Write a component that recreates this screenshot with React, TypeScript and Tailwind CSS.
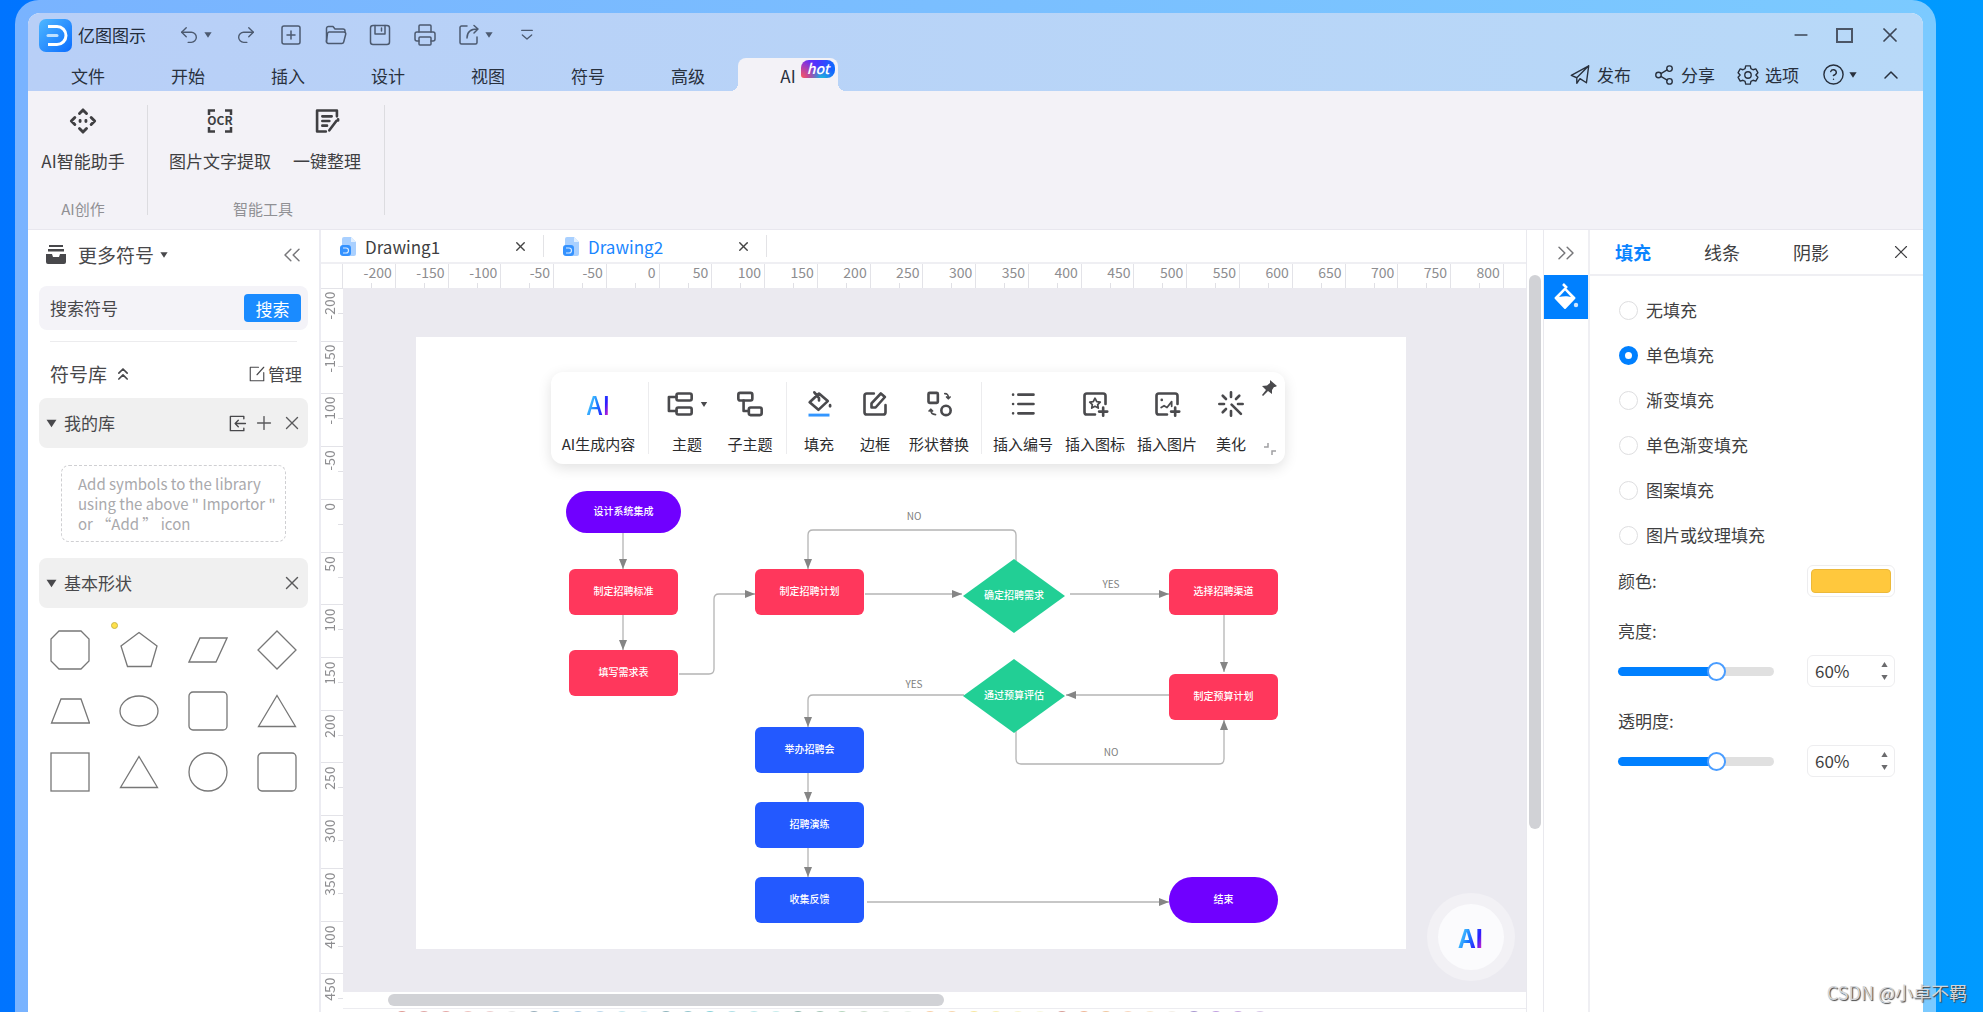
import { useState } from "react";
import type { ReactNode } from "react";
import {
  ChevronUp,
  ChevronsLeft,
  ChevronsRight,
  ChevronsUp,
  CircleQuestionMark,
  Minus,
  Plus,
  Printer,
  Redo2,
  Share2,
  SquarePlus,
  Undo2,
  X
} from "lucide-react";

interface IconProps {
  children: ReactNode;
  className?: string;
  strokeWidth?: number;
}

// 24x24 line icon wrapper, same defaults as lucide
const Icon = ({ children, className = "size-6", strokeWidth = 2 }: IconProps) => (
  <svg
    viewBox="0 0 24 24"
    className={className}
    fill="none"
    stroke="currentColor"
    strokeWidth={strokeWidth}
    strokeLinecap="round"
    strokeLinejoin="round"
    aria-hidden="true"
  >
    {children}
  </svg>
);

const Caret = ({ className = "w-2 h-1.5" }: { className?: string }) => (
  <svg viewBox="0 0 10 7" className={className} fill="currentColor" aria-hidden="true">
    <path d="M.5 0h9L5 7z" />
  </svg>
);

const Logo = () => (
  <svg viewBox="0 0 33 33" className="size-[33px]" aria-hidden="true">
    <defs>
      <linearGradient id="logo" x1="0" y1="0" x2="1" y2="1">
        <stop offset="0" stopColor="#4fb8ff" />
        <stop offset="1" stopColor="#0a6cff" />
      </linearGradient>
    </defs>
    <rect width="33" height="33" rx="7" fill="url(#logo)" />
    <path d="M9 7.500h9a9 9 0 0 1 0 18h-9" fill="none" stroke="#fff" strokeWidth="3" />
    <path d="M9 16.500h9" stroke="#bfe0ff" strokeWidth="3" strokeLinecap="round" />
  </svg>
);

const FolderIcon = () => (
  <Icon className="size-6" strokeWidth={1.5}>
    <path d="M2.500 19V5.500a2 2 0 0 1 2-2h4.500l2 2.500h8a2 2 0 0 1 2 2v1" />
    <path d="M5 9h15a1.800 1.800 0 0 1 1.700 2.300l-2 7.700a2 2 0 0 1-2 1.500H4.500a2 2 0 0 1-2-2.500l1-7.500A1.800 1.800 0 0 1 5 9z" />
  </Icon>
);

const SaveIcon = () => (
  <Icon className="size-6" strokeWidth={1.5}>
    <rect x="2.500" y="2.500" width="19" height="19" rx="2.500" />
    <path d="M7 2.500v8.500h10V2.500M13.500 5v3" />
  </Icon>
);

const ExportIcon = () => (
  <Icon className="size-6" strokeWidth={1.5}>
    <path d="M10 3H4.500a1.500 1.500 0 0 0-1.500 1.500v15A1.500 1.500 0 0 0 4.500 21h14a1.500 1.500 0 0 0 1.500-1.500V14" />
    <path d="M10 15c0-6 3-9 10.500-9M17 2.500 21 6l-4 4" />
  </Icon>
);

const SendIcon = () => (
  <Icon className="size-[22px]" strokeWidth={1.5}>
    <path d="M21.500 2 2.500 12.500l6 2.500L21.500 2 19 20.500l-7-4.500M8.500 15v6l3.500-5" />
  </Icon>
);

const GearIcon = () => (
  <Icon className="size-[22px]" strokeWidth={1.5}>
    <path d="M9.500 2h5l.7 3 2.300 1.300 3-.9 2.300 4.100-2.200 2.500 2.200 2.500-2.300 4.100-3-.9-2.300 1.300-.7 3h-5l-.7-3-2.300-1.300-3 .9-2.300-4.100L3.400 12 1.200 9.500l2.300-4.100 3 .9L8.800 5z" />
    <circle cx="12" cy="12" r="3.500" />
  </Icon>
);

const AssistantIcon = () => (
  <Icon className="size-7" strokeWidth={2.5}>
    <path d="M9 5.500 12 2.500l3 3M9 18.500l3 3 3-3M5 9l-3 3 3 3M19 9l3 3-3 3" />
    <path d="M9.500 11.500v1M14.500 11.500v1" />
  </Icon>
);

const OcrIcon = () => (
  <svg viewBox="0 0 28 28" className="size-7" aria-hidden="true">
    <path
      d="M3 8V3.500h6M19 3.500h6V8M25 20v4.500h-6M9 24.500H3V20"
      fill="none"
      stroke="currentColor"
      strokeWidth="2.500"
    />
    <text x="14" y="18" fontSize="12" fontWeight="700" textAnchor="middle" fill="currentColor">
      OCR
    </text>
  </svg>
);

const TidyIcon = () => (
  <Icon className="size-7" strokeWidth={2.25}>
    <path d="M11 21H3.500V3h17v5" />
    <path d="M8 8h8M8 12h6M8 16h4M14 20l6-8M21.500 10.500v1" />
  </Icon>
);

const DrawerIcon = () => (
  <svg viewBox="0 0 22 22" className="size-[22px]" fill="currentColor" aria-hidden="true">
    <path d="M4 1h14v2H4zM3 5h16v2.500H3zM1 10h6l1 3h6l1-3h6v8a2 2 0 0 1-2 2H3a2 2 0 0 1-2-2z" />
  </svg>
);

const DocIcon = () => (
  <svg viewBox="0 0 18 21" className="w-[18px] h-[21px]" aria-hidden="true">
    <path d="M5 1h7l5 5v12a2 2 0 0 1-2 2H5a2 2 0 0 1-2-2V3a2 2 0 0 1 2-2z" fill="#a9d0ff" />
    <path d="M12 1l5 5h-5z" fill="#e2f0ff" />
    <rect x="1" y="9" width="11" height="11" rx="3" fill="#3492ff" />
    <path d="M4 12h3a2.500 2.500 0 0 1 0 5H4" fill="none" stroke="#d7eaff" strokeWidth="1.200" />
  </svg>
);

const BucketSolidIcon = () => (
  <svg viewBox="0 0 26 28" className="w-[26px] h-7" aria-hidden="true">
    <path d="M10 1l4 4" stroke="#fff" strokeWidth="2.500" />
    <path d="M12 5.500 21.500 15 12 25 2.500 15z" fill="#fff" stroke="#fff" strokeWidth="2" strokeLinejoin="round" />
    <path d="M12 7.500l6 6.500c-3-1-8-1-12 0z" fill="#0080ff" />
    <circle cx="23" cy="22" r="2.200" fill="#cfe6ff" />
  </svg>
);

const TopicIcon = () => (
  <Icon className="size-7" strokeWidth={2.25}>
    <rect x="9" y="3" width="13" height="6" rx="1.500" />
    <rect x="9" y="15" width="13" height="6" rx="1.500" />
    <path d="M9 6H2.500v12H9" />
  </Icon>
);

const SubTopicIcon = () => (
  <Icon className="size-7" strokeWidth={2.25}>
    <rect x="2" y="2.500" width="12" height="6.500" rx="1.500" />
    <rect x="11" y="15" width="11" height="6.500" rx="1.500" />
    <path d="M6.500 9v9H11" />
  </Icon>
);

const FillIcon = () => (
  <Icon className="size-7" strokeWidth={2.25}>
    <path d="M12 3 19.500 9.500 11.500 17 4 10.500zM8 2l4 5v2" />
    <path d="M21.500 13v1" />
    <path d="M3 21.500h18" stroke="#3396ff" strokeWidth="2.500" strokeLinecap="butt" />
  </Icon>
);

const BorderIcon = () => (
  <Icon className="size-7" strokeWidth={2.25}>
    <path d="M11 3H5a2 2 0 0 0-2 2v14a2 2 0 0 0 2 2h14a2 2 0 0 0 2-2v-6" />
    <path d="M9 15v-3.500l8-8.500 3.500 3-8 9z" />
  </Icon>
);

const ReplaceIcon = () => (
  <Icon className="size-7" strokeWidth={2.25}>
    <rect x="3" y="2.500" width="8" height="8.500" rx="1" />
    <circle cx="18" cy="17.500" r="4" />
    <path d="M17 3c2.500 0 3 1 3 4M18.500 6l1.500 1.500L21.500 6M9 21c-3 0-4-1-4-4M3.500 18 5 16.500 6.500 18" strokeWidth="1.500" />
  </Icon>
);

const NumberingIcon = () => (
  <Icon className="size-7" strokeWidth={2.25}>
    <path d="M8 4h13M8 12h13M8 20h13M3.500 4v.010M3.500 12v.010M3.500 20v.010" />
  </Icon>
);

const InsertIconIcon = () => (
  <Icon className="size-7" strokeWidth={2.25}>
    <path d="M12 21H5a2 2 0 0 1-2-2V5a2 2 0 0 1 2-2h14a2 2 0 0 1 2 2v7M19 15v7M15.500 18.500h7" />
    <path d="M12 7l1.500 3 3 .4-2.200 2.100.5 3-2.800-1.500-2.800 1.500.5-3-2.200-2.100 3-.4z" strokeWidth="1.500" />
  </Icon>
);

const InsertImageIcon = () => (
  <Icon className="size-7" strokeWidth={2.25}>
    <path d="M12 21H5a2 2 0 0 1-2-2V5a2 2 0 0 1 2-2h14a2 2 0 0 1 2 2v7M19 15v7M15.500 18.500h7" />
    <path d="M7.500 8.500v.010" />
    <path d="M7 15l2.500-1.500 2.500 1.500 4-5v4" strokeWidth="1.500" />
  </Icon>
);

const BeautifyIcon = () => (
  <Icon className="size-7" strokeWidth={2.25}>
    <path d="M12 2v4M12 18v4M2 12h4M18 12h4M4.900 4.900l2.800 2.800M19.100 4.900l-2.800 2.800M4.900 19.100l2.800-2.800M12.500 12.500l8 8" />
  </Icon>
);

const PinIcon = () => (
  <svg viewBox="0 0 16 16" className="size-4" fill="currentColor" aria-hidden="true">
    <path d="M9 0l7 6-2 1-1 0-2 3 0 4-4-3-5 5-1-1 4-5-4-4 5-.5L9 3z" />
  </svg>
);

const MENU = ["文件", "开始", "插入", "设计", "视图", "符号", "高级"];

const Header = () => (
  <header className="h-[78px] shrink-0 flex flex-col bg-linear-to-r from-[#b8cff7] to-[#b8d9f8]">
    <div className="h-11 flex items-center justify-between pl-[11px] pr-[21px]">
      <div className="flex items-center text-[#4c5a70]">
        <Logo />
        <span className="ml-1.5 text-[17px] text-[#222b3a]">亿图图示</span>
        <div className="flex items-center ml-8">
          <button className="flex items-center gap-1 w-[46px]" aria-label="撤销">
            <Undo2 className="size-[22px]" strokeWidth={1.5} />
            <Caret />
          </button>
          <button className="w-11 flex justify-center" aria-label="重做">
            <Redo2 className="size-[22px]" strokeWidth={1.5} />
          </button>
          <button className="w-[45px] flex justify-center" aria-label="新建">
            <SquarePlus className="size-6" strokeWidth={1.5} />
          </button>
          <button className="w-[45px] flex justify-center" aria-label="打开">
            <FolderIcon />
          </button>
          <button className="w-11 flex justify-center" aria-label="保存">
            <SaveIcon />
          </button>
          <button className="w-[45px] flex justify-center" aria-label="打印">
            <Printer className="size-6" strokeWidth={1.5} />
          </button>
          <button className="ml-2.5 flex items-center gap-1" aria-label="导出">
            <ExportIcon />
            <Caret />
          </button>
          <button className="ml-[26px]" aria-label="更多">
            <Icon className="size-4" strokeWidth={2}>
              <path d="M4 5h16M5 12l7 6 7-6" />
            </Icon>
          </button>
        </div>
      </div>
      <div className="flex items-center gap-[25px] text-[#3d4656]">
        <button aria-label="最小化">
          <Minus className="size-5" strokeWidth={2} />
        </button>
        <button aria-label="最大化">
          <span className="block w-[17px] h-[15px] border-2 border-[#4c5666]" />
        </button>
        <button aria-label="关闭">
          <X className="size-6" strokeWidth={1.75} />
        </button>
      </div>
    </div>

    <div className="flex-1 flex items-end justify-between pl-2.5">
      <nav className="flex text-[17px] text-[#28303d]">
        {MENU.map((item) => (
          <button key={item} className="w-[100px] h-[33px] pt-0.5">
            {item}
          </button>
        ))}
        <button className="relative w-[100px] h-[33px] pt-0.5 rounded-t-lg bg-[#f3f2f7] before:absolute before:-left-2 before:bottom-0 before:size-2 before:bg-[radial-gradient(circle_at_0_0,transparent_8px,#f3f2f7_8px)] after:absolute after:-right-2 after:bottom-0 after:size-2 after:bg-[radial-gradient(circle_at_100%_0,transparent_8px,#f3f2f7_8px)]">
          AI
          <span className="absolute right-[3px] top-[2px] w-[34px] h-[18px] rounded-lg rounded-bl-[3px] bg-[radial-gradient(circle_at_0_100%,#ff5a5a_0,transparent_50%),radial-gradient(circle_at_60%_110%,#18c8d8_0,transparent_50%),linear-gradient(to_right,#7a2bf0,#4a35ff_50%,#0a6cff)] text-white text-[14px] leading-[17px] font-medium italic">
            hot
          </span>
        </button>
      </nav>
      <div className="flex items-center h-[33px] pr-5 text-[17px] text-[#28303d]">
        <button className="flex items-center gap-1.5">
          <SendIcon />
          发布
        </button>
        <button className="flex items-center gap-1.5 ml-[22px]">
          <Share2 className="size-[22px]" strokeWidth={1.5} />
          分享
        </button>
        <button className="flex items-center gap-1.5 ml-[22px]">
          <GearIcon />
          选项
        </button>
        <button className="flex items-center gap-1 ml-[23px]" aria-label="帮助">
          <CircleQuestionMark className="size-[23px]" strokeWidth={1.5} />
          <Caret />
        </button>
        <button className="ml-[22px]" aria-label="收起功能区">
          <ChevronUp className="size-6" strokeWidth={1.5} />
        </button>
      </div>
    </div>
  </header>
);

const RibbonButton = ({ icon, label, className }: { icon: ReactNode; label: string; className: string }) => (
  <button className={`flex flex-col items-center gap-3.5 ${className}`}>
    {icon}
    <span className="text-[17px] leading-6 whitespace-nowrap">{label}</span>
  </button>
);

const Ribbon = () => (
  <div className="h-[139px] shrink-0 flex bg-[#f3f2f7] border-b border-[#e8e7ee] text-[#3f3f42]">
    <section className="pt-4 pb-2.5 pl-2.5 pr-[19px] flex flex-col justify-between">
      <RibbonButton icon={<AssistantIcon />} label="AI智能助手" className="w-[90px]" />
      <p className="text-[15px] leading-5 text-center text-[#909094]">AI创作</p>
    </section>
    <div className="w-px my-3.5 bg-[#dcdce0]" />
    <section className="pt-4 pb-2.5 pl-4 pr-1.5 flex flex-col justify-between">
      <div className="flex">
        <RibbonButton icon={<OcrIcon />} label="图片文字提取" className="w-28" />
        <RibbonButton icon={<TidyIcon />} label="一键整理" className="w-[102px]" />
      </div>
      <p className="pr-4 text-[15px] leading-5 text-center text-[#909094]">智能工具</p>
    </section>
    <div className="w-px my-3.5 bg-[#dcdce0]" />
  </div>
);

// Library shapes, each drawn in a 40x40 box
const SHAPES: ReactNode[] = [
  <path d="M9 1h22l8 8v22l-8 8H9l-8-8V9z" />,
  <path d="M20 2.500 38 16l-6 20.500H8.500L2 16z" />,
  <path d="M12 8h27L28 32H1z" />,
  <path d="M20 1l19 19-19 19L1 20z" />,
  <path d="M11 8h20l8.500 24H1.500z" />,
  <ellipse cx="20" cy="20" rx="19" ry="15" />,
  <rect x="1" y="1" width="38" height="38" rx="4" />,
  <path d="M20 4.500 38.500 35.500h-37z" />,
  <rect x="1" y="1" width="38" height="38" />,
  <path d="M20 4.500 38.500 35.500h-37z" />,
  <circle cx="20" cy="20" r="19" />,
  <rect x="1" y="1" width="38" height="38" rx="4" />
];

const Sidebar = () => (
  <aside className="w-[293px] shrink-0 bg-white border-r-2 border-[#ececf2] px-[11px] text-[#48484b]">
    <div className="h-[50px] flex items-center pl-1.5 pr-0.5">
      <DrawerIcon />
      <button className="ml-[11px] flex items-center gap-1.5 text-[19px]">
        更多符号
        <Caret />
      </button>
      <button className="ml-auto" aria-label="折叠面板">
        <ChevronsLeft className="size-7 text-[#77777a]" strokeWidth={1.25} />
      </button>
    </div>

    <form className="mt-1.5 h-11 flex items-center rounded-lg bg-[#f4f3f8] pl-[11px] pr-[7px]">
      <input
        type="search"
        aria-label="搜索符号"
        placeholder="搜索符号"
        className="flex-1 min-w-0 bg-transparent text-[17px] outline-none placeholder:text-[#48484b]"
      />
      <button type="button" className="w-[57px] h-7 rounded bg-[#1a8bff] text-[17px] leading-none text-white">
        搜索
      </button>
    </form>

    <div className="mt-[11px] mx-[11px] h-px bg-[#ececee]" />

    <div className="h-14 mt-1 flex items-center pl-[11px] pr-1.5">
      <h2 className="text-[19px]">符号库</h2>
      <ChevronsUp className="ml-1.5 size-5" strokeWidth={2} />
      <button className="ml-auto flex items-center gap-0.5 text-[17px]">
        <Icon className="size-[18px]" strokeWidth={1.5}>
          <path d="M14 3H3v18h18V10M12 13l9-10" />
        </Icon>
        管理
      </button>
    </div>

    <div className="h-[50px] -mt-1 flex items-center rounded-lg bg-[#f0f0f0] pl-[7px] pr-[5px]">
      <Caret className="w-[11px] h-[9px]" />
      <h3 className="ml-[7px] text-[17px]">我的库</h3>
      <div className="ml-auto flex items-center gap-1.5">
        <button aria-label="导入">
          <Icon className="size-[19px]" strokeWidth={1.75}>
            <path d="M20 6V3H3v18h17v-3M22 12H9M13 8l-4 4 4 4" />
          </Icon>
        </button>
        <button aria-label="添加">
          <Plus className="size-[22px] text-[#5a5a5c]" strokeWidth={1.5} />
        </button>
        <button aria-label="移除我的库">
          <X className="size-[22px] text-[#5a5a5c]" strokeWidth={1.5} />
        </button>
      </div>
    </div>

    <p className="mx-[22px] mt-[17px] h-[77px] border border-dashed border-[#cfcfd2] rounded-lg pt-2 pl-4 text-[15px] leading-5 text-[#a9a9ac] whitespace-nowrap">
      Add symbols to the library
      <br />
      using the above &quot; Importor &quot;
      <br />
      or “Add ” icon
    </p>

    <div className="mt-4 h-[50px] flex items-center rounded-lg bg-[#f0f0f0] pl-[7px] pr-[5px]">
      <Caret className="w-[11px] h-[9px]" />
      <h3 className="ml-[7px] text-[17px]">基本形状</h3>
      <button className="ml-auto" aria-label="移除基本形状">
        <X className="size-[22px] text-[#5a5a5c]" strokeWidth={1.5} />
      </button>
    </div>

    <div className="relative mt-[22px] mx-[11px] grid grid-cols-[repeat(4,auto)] justify-between gap-y-[21px]">
      {SHAPES.map((shape, index) => (
        <button key={index} aria-label={`形状 ${index + 1}`}>
          <svg viewBox="0 0 40 40" className="size-10" fill="none" stroke="#777" strokeWidth="1.300">
            {shape}
          </svg>
        </button>
      ))}
      <span className="absolute left-[61px] -top-2 size-[7px] rounded-full border border-[#c9b64a] bg-[#ffe14a]" />
    </div>
  </aside>
);

const TABS = ["Drawing1", "Drawing2"];

const DocumentTabs = () => {
  const [active, setActive] = useState("Drawing2");

  return (
    <div className="h-[34px] shrink-0 flex items-center border-b-2 border-[#efeff3]">
      {TABS.map((tab) => (
        <div key={tab} className="w-[223px] h-[22px] flex items-center border-r border-[#e3e3e6] pl-[18px] pr-[15px]">
          <DocIcon />
          <button
            onClick={() => setActive(tab)}
            className={`ml-2 text-[17px] leading-none ${active === tab ? "text-[#1a86ff]" : "text-[#3f3f42]"}`}
          >
            {tab}
          </button>
          <button className="ml-auto" aria-label={`关闭 ${tab}`}>
            <X className="size-[15px] text-[#444]" strokeWidth={2.25} />
          </button>
        </div>
      ))}
    </div>
  );
};

const RULER_X = [-200, -150, -100, -50, -50, 0, 50, 100, 150, 200, 250, 300, 350, 400, 450, 500, 550, 600, 650, 700, 750, 800];
const RULER_Y = [-200, -150, -100, -50, 0, 50, 100, 150, 200, 250, 300, 350, 400, 450];

const HorizontalRuler = () => (
  <div className="h-6 shrink-0 flex bg-white">
    <div className="w-[22px] shrink-0 border-r border-[#e3e3e8]" />
    <div className="flex-1 flex pr-[22px]">
      {RULER_X.map((value, index) => (
        <div key={index} className="flex-1 flex flex-col justify-between border-r border-[#e3e3e8]">
          <span className="pr-[3px] text-right text-[14px] leading-4 text-[#8d8d90]">{value}</span>
          <span className="ml-7 h-[5px] w-px bg-[#e0e0e5]" />
        </div>
      ))}
    </div>
  </div>
);

const VerticalRuler = () => (
  <div className="w-[22px] shrink-0 bg-white">
    <div className="h-[738px] flex flex-col">
      {RULER_Y.map((value) => (
        <div key={value} className="flex-1 flex justify-between border-t border-[#e3e3e8]">
          <span className="pb-[3px] text-right rotate-180 [writing-mode:vertical-rl] text-[14px] leading-4 text-[#8d8d90]">
            {value}
          </span>
          <span className="mt-6 w-[5px] h-px bg-[#e0e0e5]" />
        </div>
      ))}
    </div>
  </div>
);

const ToolButton = ({ icon, label, className }: { icon: ReactNode; label: string; className: string }) => (
  <button className={`flex flex-col items-center gap-4 ${className}`}>
    <span className="h-7 flex items-center gap-1.5">{icon}</span>
    <span className="text-[15px] leading-5 text-[#2b2b2d] whitespace-nowrap">{label}</span>
  </button>
);

const FloatingToolbar = () => (
  <div className="absolute left-[135px] top-[35px] w-[734px] h-[92px] flex rounded-xl bg-white shadow-[0_4px_14px_rgba(0,0,0,0.12)] text-[#4a4a4d]">
    <div className="flex pt-[18px]">
      <ToolButton
        className="w-[95px]"
        label="AI生成内容"
        icon={
          <span className="text-[25px] leading-none font-medium text-transparent bg-clip-text bg-[linear-gradient(110deg,#4fd0ff_15%,#1a7cff_45%,#2a1cff_72%,#e022c8_92%)]">
            AI
          </span>
        }
      />
    </div>
    <div className="ml-0.5 w-px my-2.5 bg-[#ececee]" />
    <div className="flex pt-[18px] pl-[7px] pr-1">
      <ToolButton
        className="w-[62px]"
        label="主题"
        icon={
          <>
            <TopicIcon />
            <Caret className="w-2 h-[5px]" />
          </>
        }
      />
      <ToolButton className="w-16" label="子主题" icon={<SubTopicIcon />} />
    </div>
    <div className="w-px my-2.5 bg-[#ececee]" />
    <div className="flex pt-[18px] pl-1 pr-1.5">
      <ToolButton className="w-14" label="填充" icon={<FillIcon />} />
      <ToolButton className="w-14" label="边框" icon={<BorderIcon />} />
      <ToolButton className="w-[72px]" label="形状替换" icon={<ReplaceIcon />} />
    </div>
    <div className="w-px my-2.5 bg-[#ececee]" />
    <div className="flex pt-[18px] pl-[5px]">
      <ToolButton className="w-[72px]" label="插入编号" icon={<NumberingIcon />} />
      <ToolButton className="w-[72px]" label="插入图标" icon={<InsertIconIcon />} />
      <ToolButton className="w-[72px]" label="插入图片" icon={<InsertImageIcon />} />
      <ToolButton className="w-14" label="美化" icon={<BeautifyIcon />} />
    </div>
    <div className="ml-auto flex flex-col items-end justify-between py-2 pr-2">
      <button aria-label="固定工具栏">
        <PinIcon />
      </button>
      <svg viewBox="0 0 14 14" className="size-3.5" fill="none" stroke="#a0a0a3" strokeWidth="1.500" aria-hidden="true">
        <path d="M5 1v4H1M9 13V9h4" />
      </svg>
    </div>
  </div>
);

// Positions are in page coordinates
const NODES = [
  { text: "设计系统集成", style: "left-[150px] top-[154px] w-[115px] h-[42px] rounded-full bg-[#7000ff]" },
  { text: "制定招聘标准", style: "left-[153px] top-[232px] w-[109px] h-[46px] rounded-md bg-[#ff375c]" },
  { text: "填写需求表", style: "left-[153px] top-[313px] w-[109px] h-[46px] rounded-md bg-[#ff375c]" },
  { text: "制定招聘计划", style: "left-[339px] top-[232px] w-[109px] h-[46px] rounded-md bg-[#ff375c]" },
  { text: "选择招聘渠道", style: "left-[753px] top-[232px] w-[109px] h-[46px] rounded-md bg-[#ff375c]" },
  { text: "制定预算计划", style: "left-[753px] top-[337px] w-[109px] h-[46px] rounded-md bg-[#ff375c]" },
  { text: "确定招聘需求", style: "left-[547px] top-[222px] w-[102px] h-[74px] [clip-path:polygon(50%_0,100%_50%,50%_100%,0_50%)] bg-[#22cf95]" },
  { text: "通过预算评估", style: "left-[547px] top-[322px] w-[102px] h-[74px] [clip-path:polygon(50%_0,100%_50%,50%_100%,0_50%)] bg-[#22cf95]" },
  { text: "举办招聘会", style: "left-[339px] top-[390px] w-[109px] h-[46px] rounded-md bg-[#2359ff]" },
  { text: "招聘演练", style: "left-[339px] top-[465px] w-[109px] h-[46px] rounded-md bg-[#2359ff]" },
  { text: "收集反馈", style: "left-[339px] top-[540px] w-[109px] h-[46px] rounded-md bg-[#2359ff]" },
  { text: "结束", style: "left-[753px] top-[540px] w-[109px] h-[46px] rounded-full bg-[#7000ff]" }
];

const EDGES = [
  "M207 196V232",
  "M207 278V313",
  "M263 337H293Q298 337 298 332V262Q298 257 303 257H339",
  "M600 224V198Q600 193 595 193H397Q392 193 392 198V232",
  "M449 257H546",
  "M654 257H753",
  "M808 278V335",
  "M753 358H650",
  "M600 394V422Q600 427 605 427H803Q808 427 808 422V383",
  "M548 358H397Q392 358 392 363V390",
  "M392 436V465",
  "M392 511V540",
  "M451 565H753"
];

const EDGE_LABELS = [
  { text: "NO", x: 498, y: 183 },
  { text: "YES", x: 695, y: 251 },
  { text: "YES", x: 498, y: 351 },
  { text: "NO", x: 695, y: 419 }
];

const Flowchart = () => (
  <>
    <svg viewBox="0 0 990 611" className="absolute left-0 top-0 w-[990px] h-[611px]" aria-hidden="true">
      <defs>
        <marker id="arrow" viewBox="0 0 10 8" refX="10" refY="4" markerWidth="10" markerHeight="8" orient="auto" markerUnits="userSpaceOnUse">
          <path d="M0 0l10 4-10 4z" fill="#858585" />
        </marker>
      </defs>
      {EDGES.map((d) => (
        <path key={d} d={d} fill="none" stroke="#b4b4b4" strokeWidth="1.300" markerEnd="url(#arrow)" />
      ))}
      {EDGE_LABELS.map(({ text, x, y }) => (
        <text key={`${x}-${y}`} x={x} y={y} fontSize="10" textAnchor="middle" fill="#808080">
          {text}
        </text>
      ))}
    </svg>
    {NODES.map(({ text, style }) => (
      <div key={text} className={`absolute flex items-center justify-center pb-0.5 text-[10px] leading-none font-medium text-white ${style}`}>
        {text}
      </div>
    ))}
  </>
);

const AssistantButton = () => (
  <button
    aria-label="AI 助手"
    className="absolute right-[11px] bottom-[11px] size-[88px] rounded-full bg-[#f2f1f5] flex items-center justify-center"
  >
    <span className="size-[66px] rounded-full bg-[#fbfbfd] flex items-center justify-center text-[26px] leading-none font-bold">
      <span className="text-transparent bg-clip-text bg-[linear-gradient(110deg,#4fd0ff_15%,#1a7cff_45%,#2a1cff_72%,#e022c8_92%)]">
        AI
      </span>
    </span>
  </button>
);

const SWATCHES = [
  "#c0392b", "#c0504d", "#c9504d", "#d98880", "#d9a0a0", "#d0d0d0", "#34607a", "#2f7fb0", "#4a90c8", "#7ab0d8",
  "#8fd0e0", "#a8d8e8", "#1f6a7a", "#2a8a9a", "#12a5b5", "#5fc0d0", "#7fd0d8", "#90d8d8", "#1f6f5f", "#4f8f6f",
  "#6faf7f", "#9fbf9f", "#bfcfbf", "#d0e0d0", "#f0a050", "#f0b060", "#f0d040", "#f0e070", "#f0e8a0", "#f0f0c0",
  "#b04030", "#e07030", "#e09040", "#f0b080", "#f0d0a0", "#e8e0d0", "#5030a0", "#8040c0", "#9050c0", "#b090d0"
];

const Workspace = () => (
  <main className="flex-1 min-w-0 flex flex-col bg-white">
    <DocumentTabs />
    <HorizontalRuler />
    <div className="flex-1 min-h-0 flex">
      <VerticalRuler />
      <div className="flex-1 min-w-0 flex flex-col">
        <div className="relative flex-1 min-h-0 bg-[#ebeaf0] pt-[49px] pl-[73px] pr-[120px] pb-[43px]">
          <div className="relative h-full bg-white">
            <Flowchart />
            <FloatingToolbar />
          </div>
          <AssistantButton />
        </div>
        <div className="h-[17px] shrink-0 flex items-center border-b border-[#ececf0]">
          <div className="ml-[45px] w-[47%] h-3 rounded-full bg-[#d1d2d6]" />
        </div>
        <div className="h-[3px] shrink-0 overflow-hidden flex gap-1.5 pt-0.5 pl-[51px] opacity-50">
          {SWATCHES.map((color) => (
            <span key={color} className="size-4 shrink-0 rounded-full" style={{ backgroundColor: color }} />
          ))}
        </div>
      </div>
    </div>
  </main>
);

const FILLS = ["无填充", "单色填充", "渐变填充", "单色渐变填充", "图案填充", "图片或纹理填充"];

const SliderField = ({ id, label }: { id: string; label: string }) => (
  <div className="flex flex-col gap-3">
    <label htmlFor={id} className="text-[17px] leading-6">
      {label}
    </label>
    <div className="flex items-center justify-between">
      <input
        id={id}
        type="range"
        defaultValue={65}
        className="w-[156px] h-[9px] appearance-none rounded-full bg-[linear-gradient(to_right,#0080ff_63%,#e0e0e0_63%)] [&::-webkit-slider-thumb]:appearance-none [&::-webkit-slider-thumb]:size-[19px] [&::-webkit-slider-thumb]:rounded-full [&::-webkit-slider-thumb]:border-2 [&::-webkit-slider-thumb]:border-[#4a9dff] [&::-webkit-slider-thumb]:bg-white"
      />
      <div className="w-[88px] h-8 flex items-center rounded-md border border-[#ededef] pl-[7px] pr-1.5">
        <input
          type="text"
          aria-label={`${label}数值`}
          defaultValue="60%"
          className="w-0 flex-1 text-[17px] outline-none"
        />
        <div className="flex flex-col gap-2 text-[#6a6a6d]">
          <button className="rotate-180" aria-label="增加">
            <Caret className="w-[7px] h-[5px] block" />
          </button>
          <button aria-label="减少">
            <Caret className="w-[7px] h-[5px] block" />
          </button>
        </div>
      </div>
    </div>
  </div>
);

const FormatPanel = () => {
  const [fill, setFill] = useState("单色填充");

  return (
    <aside className="w-[333px] shrink-0 bg-white text-[#3f3f42]">
      <div className="h-[46px] flex items-center border-b-2 border-[#efeff3] pl-[25px] pr-[11px] text-[18px]">
        <div className="flex gap-[53px]">
          <button className="font-bold text-[#0a84ff]">填充</button>
          <button>线条</button>
          <button>阴影</button>
        </div>
        <button className="ml-auto" aria-label="关闭面板">
          <X className="size-[22px]" strokeWidth={1.25} />
        </button>
      </div>

      <form className="px-7 pt-[22px]">
        <fieldset className="flex flex-col gap-[21px]">
          {FILLS.map((item) => (
            <label key={item} className="flex items-center gap-2 h-6 pl-px text-[17px]">
              <input
                type="radio"
                name="fill"
                checked={fill === item}
                onChange={() => setFill(item)}
                className="size-[19px] appearance-none rounded-full border border-[#dedee0] checked:border-[6px] checked:border-[#0080ff]"
              />
              {item}
            </label>
          ))}
        </fieldset>
        <div className="mt-[18px] flex items-center justify-between h-8 text-[17px]">
          <label htmlFor="fill-color">颜色:</label>
          <input
            id="fill-color"
            type="color"
            defaultValue="#ffc83d"
            className="w-[88px] h-8 p-[3px] appearance-none rounded-md border border-[#ededef] bg-white [&::-webkit-color-swatch-wrapper]:p-0 [&::-webkit-color-swatch]:rounded [&::-webkit-color-swatch]:border-[#ecb93a]"
          />
        </div>
        <div className="mt-[22px] flex flex-col gap-[22px]">
          <SliderField id="brightness" label="亮度:" />
          <SliderField id="opacity" label="透明度:" />
        </div>
      </form>
    </aside>
  );
};

const App = () => (
  <div className="relative h-screen overflow-hidden bg-linear-to-r from-[#0074ff] to-[#009aff] pl-[15px] pr-[47px] font-['Noto_Sans_CJK_SC',sans-serif]">
    <div className="h-full rounded-t-[24px] bg-linear-to-r from-[#79b3ff] to-[#7bcaff] px-[13px] pt-[13px]">
      <div className="h-full rounded-t-xl overflow-hidden flex flex-col bg-white">
        <Header />
        <Ribbon />
        <div className="flex-1 min-h-0 flex">
          <Sidebar />
          <Workspace />
          <div className="w-[18px] shrink-0 bg-white border-x border-[#e9e9ee] px-0.5 pt-[45px]">
            <div className="h-[554px] rounded-full bg-[#d1d2d6]" />
          </div>
          <div className="w-[46px] shrink-0 bg-white border-r-2 border-[#efeff3]">
            <button className="w-full h-[45px] flex items-center justify-center text-[#77777a]" aria-label="展开面板">
              <ChevronsRight className="size-7" strokeWidth={1.25} />
            </button>
            <button className="w-full h-11 flex items-center justify-center bg-[#0080ff]" aria-label="填充样式">
              <BucketSolidIcon />
            </button>
          </div>
          <FormatPanel />
        </div>
      </div>
    </div>
    <p className="absolute right-4 bottom-2 text-[18px] leading-6 text-[#d3d6da] [text-shadow:1px_1px_1px_#444]">CSDN @小卓不羁</p>
  </div>
);

export default App;
